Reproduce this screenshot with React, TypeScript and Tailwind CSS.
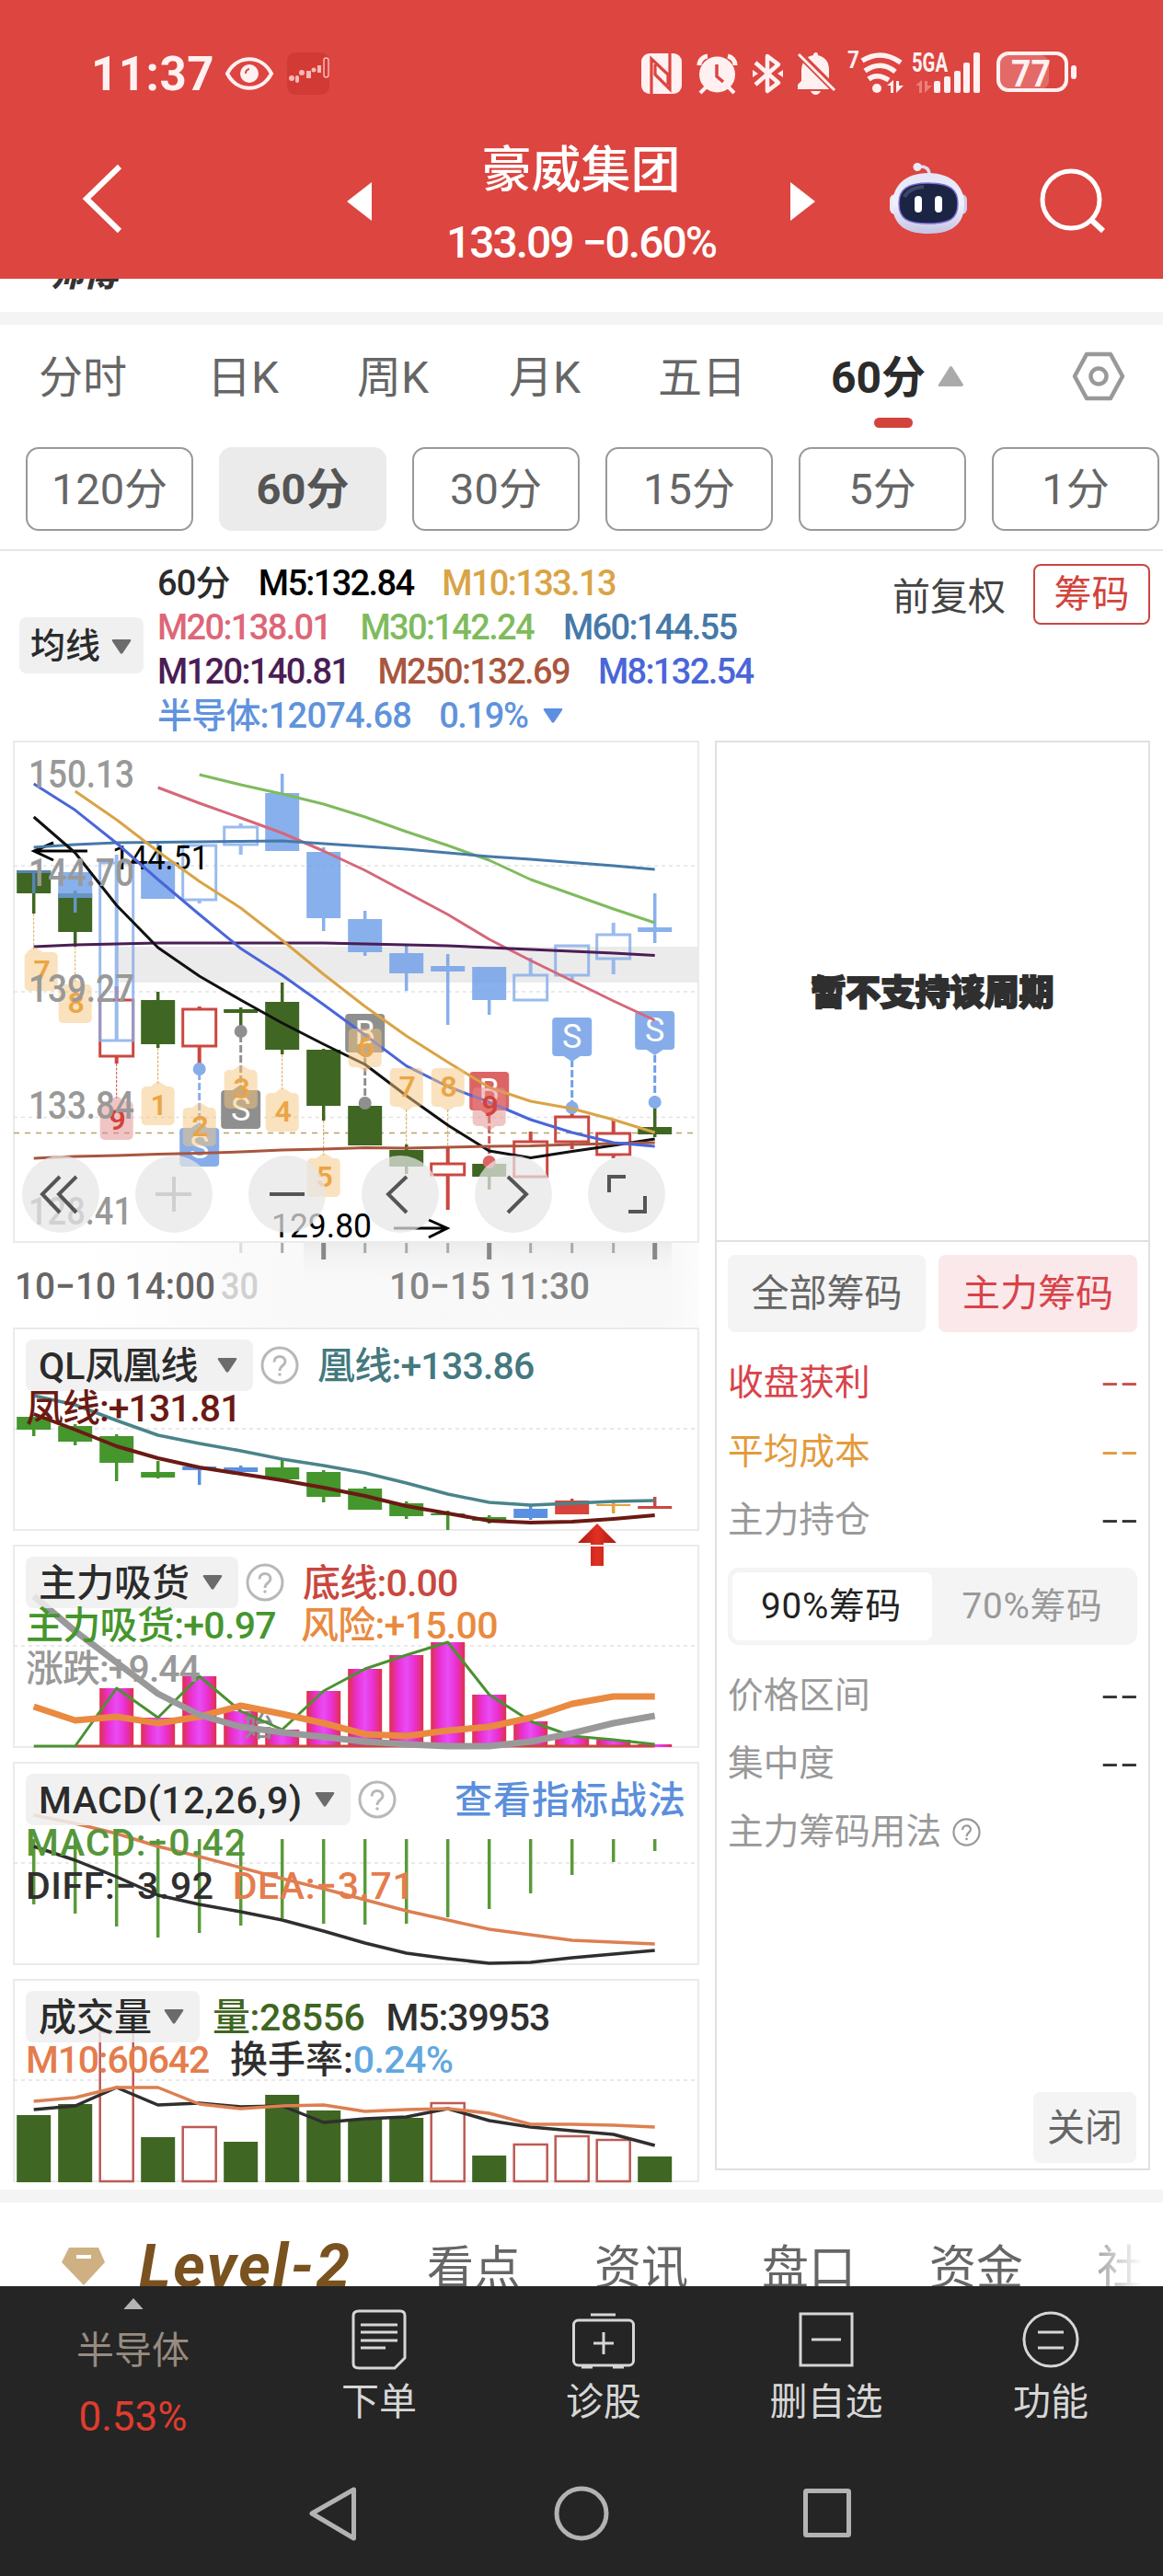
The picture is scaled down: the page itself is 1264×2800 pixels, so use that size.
import type { ReactNode } from 'react';

// every chart shares the same 16 columns, 45px apart
const colX = (i: number) => 36.7 + 45 * i;

type Kind = 'fill' | 'hollow';

interface Candle {
  top: number;
  bottom: number;
  high: number;
  low: number;
  kind: Kind;
  color: string;
}

const GREEN = '#3f6622';
const RED = '#cc4740';
const BLUE = '#86adea';
const DEEP_BLUE = '#6f9fe8';

function c(top: number, bottom: number, high: number, low: number, kind: Kind, color: string): Candle {
  return { top, bottom, high, low, kind, color };
}

const priceCandles: Candle[] = [
  c(946, 971, 946, 993, 'fill', GREEN),
  c(971, 1013, 968, 1029, 'fill', GREEN),
  c(1086, 1148, 1072, 1156, 'hollow', RED),
  c(1087, 1135, 1078, 1139, 'fill', GREEN),
  c(1096, 1137, 1094, 1162, 'hollow', RED),
  c(1097, 1101, 1095, 1121, 'fill', GREEN),
  c(1089, 1141, 1068, 1146, 'fill', GREEN),
  c(1141, 1202, 1140, 1218, 'fill', GREEN),
  c(1202, 1245, 1202, 1245, 'fill', GREEN),
  c(1250, 1268, 1244, 1276, 'fill', GREEN),
  c(1264, 1277, 1246, 1315, 'hollow', RED),
  c(1265, 1279, 1265, 1293, 'fill', GREEN),
  c(1240, 1279, 1230, 1279, 'hollow', RED),
  c(1213, 1241, 1205, 1249, 'hollow', RED),
  c(1231, 1255, 1216, 1259, 'hollow', RED),
  c(1225, 1233, 1198, 1236, 'fill', GREEN),
];

const sectorCandles: Candle[] = [
  c(946, 949, 946, 971, 'fill', '#5c8cd0'),
  c(948, 976, 968, 992, 'fill', DEEP_BLUE),
  c(937, 1131, 929, 937, 'hollow', BLUE),
  c(936, 977, 914, 977, 'fill', DEEP_BLUE),
  c(918, 978, 918, 982, 'hollow', BLUE),
  c(898, 918, 895, 929, 'hollow', BLUE),
  c(862, 925, 841, 925, 'fill', DEEP_BLUE),
  c(926, 998, 921, 1012, 'fill', DEEP_BLUE),
  c(999, 1035, 990, 1039, 'fill', DEEP_BLUE),
  c(1036, 1058, 1028, 1077, 'fill', DEEP_BLUE),
  c(1050, 1056, 1037, 1114, 'fill', DEEP_BLUE),
  c(1051, 1087, 1051, 1103, 'fill', DEEP_BLUE),
  c(1059, 1087, 1041, 1087, 'hollow', BLUE),
  c(1027, 1060, 1027, 1065, 'hollow', BLUE),
  c(1015, 1042, 1003, 1059, 'hollow', BLUE),
  c(1008, 1013, 971, 1025, 'fill', DEEP_BLUE),
];

const qlGreen = '#45962d';
const qlBlue = '#5a90e2';
const qlCandles: Candle[] = [
  c(1540, 1554, 1540, 1561, 'fill', qlGreen),
  c(1550, 1567, 1548, 1571, 'fill', qlGreen),
  c(1561, 1590, 1559, 1610, 'fill', qlGreen),
  c(1600, 1606, 1588, 1607, 'fill', qlGreen),
  c(1594, 1598, 1594, 1614, 'fill', qlBlue),
  c(1595, 1600, 1593, 1602, 'fill', qlBlue),
  c(1595, 1608, 1587, 1608, 'fill', qlGreen),
  c(1600, 1627, 1598, 1633, 'fill', qlGreen),
  c(1618, 1641, 1616, 1641, 'fill', qlGreen),
  c(1634, 1648, 1632, 1651, 'fill', qlGreen),
  c(1645, 1647, 1642, 1663, 'fill', qlGreen),
  c(1649, 1653, 1647, 1656, 'fill', qlGreen),
  c(1640, 1650, 1636, 1652, 'fill', qlBlue),
  c(1631, 1646, 1629, 1646, 'fill', '#d8433b'),
  c(1635, 1637, 1632, 1645, 'fill', '#e3a23c'),
  c(1637, 1640, 1627, 1640, 'fill', '#cc4740'),
];

function Candles({ data }: { data: Candle[] }) {
  return (
    <>
      {data.map((d, i) => {
        const x = colX(i);
        if (d.kind === 'hollow') {
          return (
            <g key={i} stroke={d.color} fill="none">
              <path strokeWidth={4} d={`M${x} ${d.high}V${d.top}M${x} ${d.bottom}V${d.low}`} />
              <rect x={x - 18} y={d.top + 1} width={36} height={d.bottom - d.top - 1} strokeWidth={3} />
            </g>
          );
        }
        return (
          <g key={i} fill={d.color}>
            <rect x={x - 1.75} y={d.high} width={3.5} height={d.top - d.high} />
            <rect x={x - 1.75} y={d.bottom} width={3.5} height={d.low - d.bottom} />
            <rect x={x - 18.5} y={d.top} width={37} height={d.bottom - d.top} />
          </g>
        );
      })}
    </>
  );
}

interface LineProps {
  ys: number[];
  color: string;
  from?: number;
  width?: number;
}

function Line({ ys, color, from = 0, width = 3 }: LineProps) {
  const points = ys.map((y, i) => `${colX(i + from)},${y}`).join(' ');
  return <polyline points={points} fill="none" stroke={color} strokeWidth={width} strokeLinejoin="round" />;
}

const dayTags = [
  { n: '7', i: 0, y: 1035, dx: 8 },
  { n: '8', i: 1, y: 1070 },
  { n: '9', i: 2, y: 1197, red: true },
  { n: '1', i: 3, y: 1181 },
  { n: '2', i: 4, y: 1204 },
  { n: '3', i: 5, y: 1163 },
  { n: '4', i: 6, y: 1188 },
  { n: '5', i: 7, y: 1259 },
  { n: '6', i: 8, y: 1118, below: true },
  { n: '7', i: 9, y: 1161, below: true },
  { n: '8', i: 10, y: 1161, below: true },
  { n: '9', i: 11, y: 1182, below: true, red: true },
];

const signalTags = [
  { t: 'S', i: 4, y: 1226, color: '#86adea' },
  { t: 'S', i: 5, y: 1185, color: '#8f8f8f' },
  { t: 'B', i: 8, y: 1102, color: '#8f8f8f', below: true },
  { t: 'B', i: 11, y: 1165, color: '#dd6464', below: true },
  { t: 'S', i: 13, y: 1106, color: '#86adea', below: true },
  { t: 'S', i: 15, y: 1099, color: '#86adea', below: true },
];

const signalDots = [
  { i: 4, y: 1162, color: '#86adea' },
  { i: 5, y: 1121, color: '#8f8f8f' },
  { i: 8, y: 1199, color: '#8f8f8f' },
  { i: 11, y: 1263, color: '#dd6464' },
  { i: 13, y: 1204, color: '#86adea' },
  { i: 15, y: 1198, color: '#86adea' },
];

const leaders = [
  { i: 0, a: 993, b: 1032, color: '#d9b060', w: 1 },
  { i: 1, a: 1029, b: 1067, color: '#d9b060', w: 1 },
  { i: 2, a: 1156, b: 1194, color: '#cc4740', w: 1 },
  { i: 3, a: 1139, b: 1178, color: '#d9a445', w: 1 },
  { i: 4, a: 1166, b: 1222, color: '#86adea', w: 3 },
  { i: 5, a: 1125, b: 1184, color: '#8f8f8f', w: 3 },
  { i: 6, a: 1146, b: 1184, color: '#d9a445', w: 1 },
  { i: 7, a: 1218, b: 1256, color: '#d9a445', w: 1 },
  { i: 8, a: 1150, b: 1200, color: '#8f8f8f', w: 3 },
  { i: 9, a: 1206, b: 1244, color: '#d9a445', w: 1 },
  { i: 10, a: 1206, b: 1246, color: '#d9a445', w: 1 },
  { i: 11, a: 1213, b: 1262, color: '#cc5a5a', w: 3 },
  { i: 13, a: 1152, b: 1200, color: '#6f9fe8', w: 3 },
  { i: 15, a: 1147, b: 1194, color: '#6f9fe8', w: 3 },
];

interface AxisTextProps {
  x: number;
  y: number;
  w: number;
  size: number;
  color: string;
  weight?: number;
  children: string;
}

function AxisText({ x, y, w, size, color, weight = 500, children }: AxisTextProps) {
  return (
    <text x={x} y={y} textLength={w} lengthAdjust="spacingAndGlyphs" fontSize={size} fontWeight={weight} fill={color}>
      {children}
    </text>
  );
}

const zoomButtons = [66, 189, 312, 435, 558, 681];

function MainChart() {
  return (
    <svg className="block font-['Roboto',sans-serif] font-medium" width={746} height={546} viewBox="14 805 746 546">
      <rect x={15} y={806} width={744} height={544} fill="#fff" stroke="#ebebeb" strokeWidth={2} />
      <rect x={127} y={1029} width={632} height={39} fill="#ebebeb" />
      {[941, 1078, 1214.5].map((y) => (
        <path key={y} d={`M15 ${y}H758`} stroke="#e4e4e4" strokeWidth={1.5} strokeDasharray="4 4" />
      ))}
      <path d="M15 1231.6H758" stroke="#b8a26a" strokeWidth={1.5} strokeDasharray="6 6" />

      <Candles data={priceCandles} />
      <g opacity={0.82}>
        <Candles data={sectorCandles} />
      </g>

      <AxisText x={122} y={945} w={105} size={36} color="#000" weight={400}>144.51</AxisText>
      <path d="M95 925H37M58 916L37 925L58 935" fill="none" stroke="#000" strokeWidth={3} />
      <AxisText x={295} y={1345} w={109} size={36} color="#000" weight={400}>129.80</AxisText>
      <path d="M428 1335H486M466 1326L486 1335L466 1345" fill="none" stroke="#000" strokeWidth={3} />

      {leaders.map((l) => (
        <path key={l.i} d={`M${colX(l.i)} ${l.a}V${l.b}`} stroke={l.color} strokeWidth={l.w} strokeDasharray={l.w > 1 ? '8 3' : '3 1.5'} />
      ))}
      {signalDots.map((d) => (
        <circle key={d.i} cx={colX(d.i)} cy={d.y} r={7} fill={d.color} />
      ))}
      {signalTags.map((s) => {
        const x = colX(s.i);
        const tip = s.below ? `M${x - 9} ${s.y + 42}l9 6l9 -6z` : `M${x - 9} ${s.y}l9 -6l9 6z`;
        return (
          <g key={s.i} fill={s.color}>
            <rect x={x - 21.5} y={s.y} width={43} height={42} rx={4} />
            <path d={tip} />
            <text x={x} y={s.y + 33} fontSize={36} fontWeight={400} textAnchor="middle" fill="#fff">{s.t}</text>
          </g>
        );
      })}

      <Line color="#7fbb5d" from={4} ys={[842, 853, 863, 874, 888, 904, 919, 935, 956, 972, 988, 1003]} />
      <Line color="#d5677a" from={3} ys={[856, 873, 889, 905.5, 925, 946, 970, 994, 1021, 1044, 1066, 1088, 1109]} />
      <Line color="#4679a8" ys={[921, 918, 916, 915.5, 915, 914.5, 914, 917, 920, 923, 927, 931, 934, 937.5, 941, 945]} />
      <Line color="#4b1d55" ys={[1029, 1027, 1026, 1025, 1025, 1025, 1025, 1025, 1026, 1027, 1028, 1030, 1032, 1034, 1036, 1038.6]} />
      <Line color="#111" ys={[888, 927, 984, 1030, 1061, 1087, 1112, 1135, 1157, 1191, 1223, 1251, 1258.5, 1251.6, 1245, 1238]} />
      <Line color="#d9a445" from={1} ys={[860, 891, 925.5, 958, 987, 1022, 1059, 1094, 1126, 1154.5, 1182, 1197, 1205, 1217, 1231]} />
      <Line color="#a9563f" ys={[1259, 1257, 1256, 1254.5, 1253.5, 1252, 1250, 1249, 1247.5, 1248, 1247, 1246, 1245.5, 1244, 1243, 1242]} />
      <Line color="#4a66d8" ys={[852, 880.6, 916.5, 956, 994, 1031, 1060, 1092, 1125, 1158.6, 1181, 1198, 1217, 1231, 1242, 1246]} />

      {dayTags.map((d, k) => {
        const x = colX(d.i) + (d.dx ?? 0);
        const tx = colX(d.i);
        const tip = d.below ? `M${x - 9} ${d.y + 41}l9 6l9 -6z` : `M${tx - 8} ${d.y}l8 -6l10 6z`;
        return (
          <g key={k}>
            <g fill={d.red ? '#e58b8b' : '#f5c67e'} opacity={0.5}>
              <rect x={x - 18} y={d.y} width={36} height={42} rx={5} />
              <path d={tip} />
            </g>
            <text x={x + 1} y={d.y + 31} fontSize={32} fontWeight={600} textAnchor="middle" fill={d.red ? '#d2433c' : '#eba545'}>
              {d.n}
            </text>
          </g>
        );
      })}

      <AxisText x={31} y={856} w={115} size={42} color="#999">150.13</AxisText>
      <AxisText x={31} y={963} w={115} size={42} color="#999">144.70</AxisText>
      <AxisText x={31} y={1089} w={115} size={42} color="#999">139.27</AxisText>
      <AxisText x={31} y={1216} w={115} size={42} color="#999">133.84</AxisText>
      <AxisText x={31} y={1331} w={113} size={42} color="#999">128.41</AxisText>

      {zoomButtons.map((x) => (
        <circle key={x} cx={x} cy={1298} r={42} fill="#e6e6e6" opacity={0.72} />
      ))}
      <g fill="none" stroke="#555" strokeWidth={4}>
        <path d="M65 1279L46 1298L65 1318M83 1279L64 1298L83 1318" />
        <path d="M169 1298H208M189 1279V1317" stroke="#cfcfcf" />
        <path d="M293 1298H331" />
        <path d="M442 1279L422 1298L442 1318" />
        <path d="M552 1279L572 1298L552 1318" />
        <path d="M662 1296V1279H680M701 1300V1317H683" />
      </g>
    </svg>
  );
}

function TimeAxis() {
  return (
    <div className="h-[92px] bg-[linear-gradient(to_right,#ffffff_10%,#f9f9f9_40%,#f8f8f8_95%,#fcfcfc_100%)]">
      <svg className="block font-['Roboto',sans-serif] font-medium" width={746} height={92} viewBox="14 1351 746 92">
        <defs>
          <linearGradient id="axisShade" x1="0" y1="0" x2="0" y2="1">
            <stop offset="0" stopColor="#e4e4e4" />
            <stop offset="1" stopColor="#f8f8f8" stopOpacity={0} />
          </linearGradient>
        </defs>
        <rect x={330} y={1351} width={400} height={50} fill="url(#axisShade)" opacity={0.6} />
        {Array.from({ length: 11 }, (_, k) => k + 5).map((i) => {
          const major = i % 4 === 3;
          const fill = major ? '#888' : '#aaa';
          return (
            <rect
              key={i}
              x={colX(i) - (major ? 2.5 : 1.5)}
              y={1351}
              width={major ? 5 : 3}
              height={major ? 18 : 11}
              fill={i === 5 ? '#ddd' : fill}
            />
          );
        })}
        <AxisText x={240} y={1412} w={41} size={40} color="#d0d0d0">30</AxisText>
        <AxisText x={16} y={1412} w={218} size={41} color="#666">10−10 14:00</AxisText>
        <AxisText x={423} y={1412} w={218} size={41} color="#858585">10−15 11:30</AxisText>
      </svg>
    </div>
  );
}

function Caret({ className }: { className: string }) {
  return (
    <svg className={`shrink-0 ${className}`} width={22} height={16} viewBox="0 0 22 16" fill="currentColor">
      <path d="M2 0H20Q22 0 21 2L12.3 15Q11 16.5 9.7 15L1 2Q0 0 2 0Z" />
    </svg>
  );
}

function Help({ size = 42, color = '#b8b8b8' }: { size?: number; color?: string }) {
  return (
    <svg className="shrink-0" width={size} height={size} viewBox="0 0 42 42" fill="none" stroke={color} strokeWidth={3}>
      <circle cx={21} cy={21} r={19} />
      <path d="M15 17.5C15 9.5 27 9.5 27 17C27 21.5 21 21.5 21 27" />
      <circle cx={21} cy={31} r={1} fill={color} strokeWidth={1.5} />
    </svg>
  );
}

interface PanelProps {
  title: string;
  chip: string;
  top: number;
  chart: ReactNode;
  head: ReactNode;
  children: ReactNode;
}

function Panel({ title, chip, top, chart, head, children }: PanelProps) {
  return (
    <section className="relative h-[221px] text-[41px] font-medium">
      <svg className="absolute left-0 top-0 overflow-visible" width={746} height={221} viewBox={`14 ${top} 746 221`}>
        <rect x={15} y={top + 1} width={744} height={219} fill="none" stroke="#ebebeb" strokeWidth={2} />
        <path d={`M15 ${top + 110}H758`} stroke="#e2e2e2" strokeWidth={1.5} strokeDasharray="4 4" />
        {chart}
      </svg>
      <div className="relative flex h-[69px] items-center pl-[14px] pt-[13px]">
        <div className={`flex h-[56px] shrink-0 items-center rounded-lg bg-[#efefef]/85 pl-[14px] text-[#2b2b2b] ${chip}`}>
          <span className="whitespace-nowrap pt-[3px]">{title}</span>
          <Caret className="ml-auto mr-[17px] text-[#6b6b6b]" />
        </div>
        {head}
      </div>
      <div className="relative whitespace-nowrap pl-[14px] leading-[47px] -mt-[4px]">{children}</div>
    </section>
  );
}

const magentaBars = [1835, 1867, 1822, 1860, 1880, 1838, 1814, 1799, 1785, 1842, 1871, 1887, 1891, 1896];
const macdBars = [2070, 2080, 2094, 2106, 2101, 2093, 2085, 2091, 2092, 2091, 2084, 2075, 2058, 2038, 2024, 2012];
const volumes: [number, boolean][] = [
  [2299, false], [2287, false], [2208, true], [2323, false], [2311, true], [2328, false], [2277, false], [2294, false],
  [2303, false], [2302, false], [2285, true], [2343, false], [2330, true], [2321, true], [2325, true], [2344, false],
];

function Panels() {
  return (
    <div className="flex flex-col gap-[15px]">
      <Panel
        title="QL凤凰线"
        chip="w-[247px]"
        top={1443}
        head={
          <>
            <span className="ml-[8px] flex"><Help /></span>
            <span className="ml-[20px] pt-[3px] tracking-[-0.8px] text-[#43797f]">凰线:+133.86</span>
          </>
        }
        chart={
          <>
            <Candles data={qlCandles} />
            <Line color="#4a8489" width={3.5} ys={[1517, 1527, 1544, 1560, 1569, 1577, 1586, 1593, 1601, 1612, 1624, 1633, 1636, 1634, 1632, 1631]} />
            <Line color="#6b1a14" width={4} ys={[1537, 1554, 1572, 1585, 1595, 1602, 1609, 1617, 1626, 1637, 1645, 1653, 1655, 1654, 1651, 1647]} />
            <defs>
              <linearGradient id="arrow" x1="0" y1="0" x2="1" y2="0">
                <stop offset="0" stopColor="#a81c14" />
                <stop offset="0.5" stopColor="#e23022" />
                <stop offset="1" stopColor="#a81c14" />
              </linearGradient>
            </defs>
            <path d="M649 1656L670 1677H656V1702H642V1677H628Z" fill="url(#arrow)" />
          </>
        }
      >
        <div className="tracking-[-1px] text-[#6b1a14]">凤线:+131.81</div>
      </Panel>

      <Panel
        title="主力吸货"
        chip="w-[231px]"
        top={1679}
        head={
          <>
            <span className="ml-[8px] flex"><Help /></span>
            <span className="ml-[20px] pt-[3px] tracking-[-0.8px] text-[#c9473f]">底线:0.00</span>
          </>
        }
        chart={
          <>
            <defs>
              <linearGradient id="magenta" x1="0" y1="0" x2="1" y2="0">
                <stop offset="0" stopColor="#e0304a" />
                <stop offset="0.25" stopColor="#ea2fd0" />
                <stop offset="0.5" stopColor="#e84cf5" />
                <stop offset="0.75" stopColor="#ea2fd0" />
                <stop offset="1" stopColor="#e0304a" />
              </linearGradient>
            </defs>
            {magentaBars.map((y, k) => (
              <rect key={k} x={colX(k + 2) - 18.5} y={y} width={37} height={1899 - y} fill="url(#magenta)" />
            ))}
            <path d={`M${colX(1)} 1898H${colX(15)}`} stroke="#c9473f" strokeWidth={3} />
            <text x={265} y={1887} fontSize={32} fill="#8b8b8b" className="font-['Noto_Sans_CJK_SC',sans-serif]">始</text>
            <Line color="#4c9132" ys={[1898, 1898, ...magentaBars]} />
            <Line color="#e98a40" width={7} ys={[1855, 1870, 1866, 1873, 1866, 1854, 1863, 1873, 1885, 1887, 1881, 1877, 1867, 1852, 1844, 1844]} />
            <Line color="#999" width={7} ys={[1735, 1773, 1807, 1841, 1864, 1877, 1883, 1888, 1893, 1896, 1898, 1898, 1893, 1884, 1873, 1865]} />
          </>
        }
      >
        <div className="flex gap-[27px] tracking-[-0.7px]">
          <span className="text-[#45962d]">主力吸货:+0.97</span>
          <span className="text-[#e98a40]">风险:+15.00</span>
        </div>
        <div className="tracking-[-1px] text-[#999]">涨跌:+9.44</div>
      </Panel>

      <Panel
        title="MACD(12,26,9)"
        chip="w-[353px] tracking-[0.5px]"
        top={1915}
        head={
          <>
            <span className="ml-[8px] flex"><Help /></span>
            <span className="ml-auto mr-[14px] pt-[3px] tracking-[1px] text-[#5b8fdc]">查看指标战法</span>
          </>
        }
        chart={
          <>
            {macdBars.map((y, i) => (
              <path key={i} d={`M${colX(i)} 1999V${y}`} stroke="#5a9a3a" strokeWidth={3.5} />
            ))}
            <Line color="#dd7f52" width={3.5} ys={[1973, 1982, 1993, 2007, 2018, 2030, 2042, 2053, 2065, 2077, 2087, 2097, 2103, 2109, 2111, 2113]} />
            <Line color="#2f2f2f" width={3.5} ys={[2007, 2022, 2040, 2060, 2070, 2078, 2087, 2099, 2112, 2123, 2129, 2134, 2133, 2128, 2124, 2120]} />
          </>
        }
      >
        <div className="tracking-[0.8px] text-[#55963a]">MACD:−0.42</div>
        <div className="flex gap-[20px] tracking-[0.6px]">
          <span className="text-[#2f2f2f]">DIFF:−3.92</span>
          <span className="text-[#e57c4d]">DEA:−3.71</span>
        </div>
      </Panel>

      <Panel
        title="成交量"
        chip="w-[189px]"
        top={2151}
        head={
          <div className="ml-[14px] flex gap-[23px] whitespace-nowrap pt-[3px]">
            <span className="tracking-[-0.4px] text-[#3f6622]">量:28556</span>
            <span className="tracking-[-1.1px] text-[#2f2f2f]">M5:39953</span>
          </div>
        }
        chart={
          <>
            {volumes.map(([y, up], i) =>
              up ? (
                <rect key={i} x={colX(i) - 18} y={y + 1} width={36} height={2371 - y - 1} fill="#fff" fillOpacity={0.6} stroke="#bd5a55" strokeWidth={2.5} />
              ) : (
                <rect key={i} x={colX(i) - 18.5} y={y} width={37} height={2372 - y} fill="#3f6622" />
              )
            )}
            <Line color="#2f2f2f" width={3.5} ys={[2293, 2289, 2269, 2288, 2286, 2290, 2289, 2307, 2303, 2301, 2292, 2305, 2312, 2316, 2320, 2332]} />
            <Line color="#dd7f52" width={3.5} ys={[2284, 2280, 2269, 2269, 2287, 2292, 2289, 2288, 2295, 2293, 2292, 2297, 2309, 2309, 2310, 2312]} />
          </>
        }
      >
        <div className="flex gap-[23px]">
          <span className="tracking-[-1.2px] text-[#e57c4d]">M10:60642</span>
          <span className="text-[#2f2f2f]">换手率:<span className="tracking-[-0.6px] text-[#62a8e0]">0.24%</span></span>
        </div>
      </Panel>
    </div>
  );
}

function StatusBar() {
  return (
    <div className="flex h-[143px] items-center justify-between pl-[99px] pr-[92px] pt-[17px] text-[#fff1f1]">
      <div className="flex items-center">
        <span className="w-[145px] text-[51px] font-bold leading-none tracking-[0.5px]">11:37</span>
        <svg width={54} height={40} viewBox="0 0 54 40" fill="none" stroke="currentColor" strokeWidth={4}>
          <path d="M3 20C14 -1 40 -1 51 20C40 41 14 41 3 20Z" />
          <circle cx={27} cy={20} r={10} fill="currentColor" stroke="none" />
          <path d="M23 20A4.500 4.500 0 0 1 27 15" stroke="#dd4540" strokeWidth={2} />
        </svg>
        <svg className="ml-[14px]" width={47} height={46} viewBox="0 0 47 46">
          <rect width={46} height={46} rx={9} fill="#d23a35" />
          <g fill="#f6b9b3">
            <circle cx={5} cy={28} r={3} />
            <rect x={9} y={25} width={4} height={8} rx={2} />
            <circle cx={16} cy={22} r={3} />
            <rect x={21} y={20} width={5} height={8} />
            <circle cx={29} cy={19} r={2.5} />
            <rect x={33} y={14} width={4} height={8} />
          </g>
          <rect x={40} y={6} width={5} height={21} rx={2.5} fill="none" stroke="#f6b9b3" strokeWidth={1.5} />
        </svg>
      </div>
      <svg className="overflow-visible font-['Roboto',sans-serif]" width={476} height={52} viewBox="696 54 476 52" fill="currentColor">
        {/* nfc */}
        <rect x={697} y={58} width={44} height={44} rx={9} />
        <path d="M708 102V64L726 81V92M728 58V97L712 81V70" fill="none" stroke="#dd4540" strokeWidth={3.2} />
        {/* alarm */}
        <circle cx={779.5} cy={81} r={19.5} />
        <path d="M760 71A10 10 0 0 1 769 61M799 71A10 10 0 0 0 791 61" fill="none" stroke="currentColor" strokeWidth={5} />
        <path d="M768 94L761 101M791 94L798 101" stroke="currentColor" strokeWidth={4} />
        <path d="M779 70V83L786 89" fill="none" stroke="#dd4540" strokeWidth={3.5} />
        {/* bluetooth */}
        <path d="M821 68L846 90L834 99V61L846 70L821 92" fill="none" stroke="currentColor" strokeWidth={4.5} strokeLinejoin="round" />
        <path d="M818 76L824 80L818 84ZM851 76L845 80L851 84Z" />
        {/* muted bell */}
        <path d="M867 97V92L871 88V76Q872 62 884 60Q884 57 887 57Q889 57 889 60Q901 63 901 76V88L907 97Z" />
        <path d="M881 99H892Q890 103 886.5 103Q883 103 881 99Z" />
        <path d="M866 56L909 99" stroke="#dd4540" strokeWidth={8} />
        <path d="M868 59L907 98" stroke="currentColor" strokeWidth={3} />
        {/* wifi */}
        <text x={921} y={74} fontSize={26} fontWeight={700} textLength={13} lengthAdjust="spacingAndGlyphs">7</text>
        <g fill="none" stroke="currentColor" strokeWidth={5.5}>
          <path d="M937 66Q958 53 979 68" />
          <path d="M940 77Q958 65 973 78" />
          <path d="M944 86Q953 79 966 87" />
        </g>
        <circle cx={953} cy={96} r={5} />
        <path d="M964 93L971 87V101H968V93ZM974 88H977V93H982L974 101Z" />
        {/* cell */}
        <text x={991} y={78} fontSize={29} fontWeight={700} textLength={39} lengthAdjust="spacingAndGlyphs">5GA</text>
        <path d="M995 93L1002 87V101H999V93ZM1005 88H1008V93H1013L1005 101Z" opacity={0.35} />
        <rect x={1015} y={88} width={7} height={13} rx={2} />
        <rect x={1026} y={83} width={7} height={18} rx={2} />
        <rect x={1037} y={77} width={7} height={24} rx={2} />
        <rect x={1047} y={68} width={7} height={33} rx={2} />
        <rect x={1058} y={57} width={7} height={44} rx={2} />
        {/* battery */}
        <rect x={1085} y={60} width={55} height={37} rx={9} opacity={0.22} />
        <rect x={1085} y={58} width={74} height={40} rx={11} fill="none" stroke="currentColor" strokeWidth={4} />
        <rect x={1164} y={71} width={6} height={15} rx={3} />
        <text x={1099} y={93.5} fontSize={40} fontWeight={700} textLength={43} lengthAdjust="spacingAndGlyphs">77</text>
      </svg>
    </div>
  );
}

function Robot() {
  return (
    <svg width={88} height={160} viewBox="965 143 88 160">
      <defs>
        <linearGradient id="shell" x1="0" y1="0" x2="0" y2="1">
          <stop offset="0" stopColor="#e3e6f6" />
          <stop offset="0.5" stopColor="#f1f0fb" />
          <stop offset="1" stopColor="#c6c3e4" />
        </linearGradient>
      </defs>
      <path d="M998 181Q1010 180 1010 190V205" fill="none" stroke="#dcd9ef" strokeWidth={3.5} />
      <circle cx={997} cy={181.5} r={4.5} fill="#eceaf6" />
      <rect x={967} y={211} width={14} height={22} rx={6} fill="#eceaf8" />
      <rect x={1037} y={211} width={14} height={22} rx={6} fill="#cfcdec" />
      <path d="M1009 188C1034 188 1048 202 1048 222C1048 245 1033 254 1009 254C985 254 970 245 970 222C970 202 984 188 1009 188Z" fill="url(#shell)" />
      <path d="M1009 199C1032 199 1041 206 1041 221C1041 238 1032 243 1009 243C986 243 977 238 977 221C977 206 986 199 1009 199Z" fill="#1c2444" stroke="#7c6fd8" strokeWidth={1.5} />
      <path d="M983 214Q988 204 1004 203" fill="none" stroke="#3e4768" strokeWidth={4} />
      <rect x={994} y={213} width={8} height={18} rx={4} fill="#fff" />
      <rect x={1016} y={213} width={8} height={18} rx={4} fill="#fff" />
    </svg>
  );
}

function Header() {
  return (
    <header className="h-[303px] bg-[#dd4540] text-white">
      <StatusBar />
      <div className="flex h-[160px]">
        <svg className="ml-[86px]" width={50} height={160} viewBox="86 143 50 160" fill="none" stroke="currentColor" strokeWidth={6}>
          <path d="M130 181L94 216L130 251" />
        </svg>
        <svg className="ml-[241px]" width={27} height={160} viewBox="377 143 27 160" fill="currentColor">
          <path d="M404 198V240L377 219Z" />
        </svg>
        <div className="w-[455px] pt-[3px] text-center">
          <h1 className="text-[54px] font-medium leading-[79px]">豪威集团</h1>
          <p className="text-[48px] font-medium leading-[78px] tracking-[-2px]">133.09 −0.60%</p>
        </div>
        <svg width={27} height={160} viewBox="859 143 27 160" fill="currentColor">
          <path d="M859 198V240L886 219Z" />
        </svg>
        <div className="ml-[79px]"><Robot /></div>
        <svg className="ml-[75px]" width={76} height={160} viewBox="1128 143 76 160" fill="none" stroke="currentColor" strokeWidth={5}>
          <circle cx={1164} cy={217} r={31} />
          <path d="M1186 239L1199 251" strokeWidth={6} />
        </svg>
      </div>
    </header>
  );
}

function PeriodTabs() {
  return (
    <nav className="grid h-[133px] grid-cols-[183px_163px_165px_162px_188px_1fr] pl-[42px] text-[48px] leading-[116px] text-[#666]">
      <span>分时</span>
      <span>日K</span>
      <span>周K</span>
      <span>月K</span>
      <span>五日</span>
      <div className="flex">
        <div className="relative w-[116px] font-bold text-[#2b2b2b]">
          60分
          <span className="absolute left-[47px] top-[101px] h-[11px] w-[42px] rounded-full bg-[#d2433c]" />
        </div>
        <svg width={30} height={114} viewBox="1019 353 30 114" fill="#aaa">
          <path d="M1032 399Q1033.500 397 1035 399L1047 418Q1047 420 1045 420H1021Q1019 420 1020 418Z" />
        </svg>
        <svg className="ml-[115px]" width={60} height={114} viewBox="1164 353 60 114" fill="none" stroke="#999" strokeWidth={4.5} strokeLinejoin="round">
          <path d="M1181 385H1207L1220 409L1207 433H1181L1168 409Z" />
          <circle cx={1194} cy={409} r={8.5} />
        </svg>
      </div>
    </nav>
  );
}

const minuteChips = ['120分', '60分', '30分', '15分', '5分', '1分'];

function MinuteChips() {
  return (
    <div className="flex h-[113px] gap-[28px] border-b-2 border-[#e6e6e6] pl-[28px]">
      {minuteChips.map((label) => {
        const active = label === '60分';
        return (
          <button
            key={label}
            className={`h-[91px] w-[182px] shrink-0 rounded-[14px] pt-[2px] text-[47px] ${
              active ? 'bg-[#ebebeb] font-bold text-[#555]' : 'border-2 border-[#999] text-[#666]'
            }`}
          >
            {label}
          </button>
        );
      })}
    </div>
  );
}

function AverageLegend() {
  return (
    <div className="flex h-[206px] text-[38px] font-medium">
      <button className="ml-[21px] mt-[72px] flex h-[61px] w-[135px] items-center rounded-lg bg-[#f0f0f0] pl-[12px] pt-[2px] text-[#2b2b2b]">
        均线
        <Caret className="ml-[12px] text-[#6b6b6b]" />
      </button>
      <div className="ml-[15px] mt-[11px] w-[780px] whitespace-nowrap leading-[48px] tracking-[-1.65px]">
        <div className="flex gap-[31px]">
          <span className="tracking-[-0.8px] text-[#2b2b2b]">60分</span>
          <span className="text-black">M5:132.84</span>
          <span className="text-[#d9a445]">M10:133.13</span>
        </div>
        <div className="flex gap-[32px]">
          <span className="text-[#dd6678]">M20:138.01</span>
          <span className="text-[#7fbb5d]">M30:142.24</span>
          <span className="text-[#4679a8]">M60:144.55</span>
        </div>
        <div className="flex gap-[31px]">
          <span className="text-[#4b1d55]">M120:140.81</span>
          <span className="text-[#a9563f]">M250:132.69</span>
          <span className="text-[#4a66d8]">M8:132.54</span>
        </div>
        <div className="flex items-center gap-[30px] tracking-[-0.8px] text-[#5f93dc]">
          <span>半导体:12074.68</span>
          <span className="tracking-[-1.4px]">0.19%</span>
          <Caret className="-ml-[14px] text-[#5b8fe0]" />
        </div>
      </div>
      <div className="ml-[19px] flex text-[41px] font-normal">
        <span className="mt-[19px] leading-[62px] text-[#444]">前复权</span>
        <button className="ml-[30px] mt-[14px] h-[66px] w-[127px] rounded-lg border-2 border-[#c9473f] pt-[1px] text-[#d2433c]">筹码</button>
      </div>
    </div>
  );
}

function StatRow({ label, tone, valueTone }: { label: string; tone: string; valueTone: string }) {
  return (
    <div className={`flex h-[74.5px] items-center justify-between ${tone}`}>
      <span>{label}</span>
      <span className={`inline-block origin-right translate-x-[3px] scale-x-[1.65] tracking-[2px] ${valueTone}`}>--</span>
    </div>
  );
}

function ChipPanel() {
  return (
    <aside className="flex h-[1554px] w-[473px] flex-col border-2 border-[#e0e0e0] bg-white text-[38.7px] text-[#999]">
      <div className="flex h-[543px] items-center justify-center border-b-2 border-[#e0e0e0] pt-[4px] text-[37.7px] font-black text-[#2f2f2f]">
        <span className="[-webkit-text-stroke:2px_#2f2f2f]">暂不支持该周期</span>
      </div>
      <div className="flex grow flex-col px-[12px]">
        <div className="mt-[14px] flex gap-[14px] text-[41px]">
          <button className="h-[84px] w-[215px] rounded-lg bg-[#f4f4f4] pt-[2px] text-[#666]">全部筹码</button>
          <button className="h-[84px] w-[216px] rounded-lg bg-[#fae8ea] pt-[2px] text-[#d8434a]">主力筹码</button>
        </div>
        <div className="mt-[18px]">
          <StatRow label="收盘获利" tone="text-[#d8434a]" valueTone="text-[#c9504c]" />
          <StatRow label="平均成本" tone="text-[#e39b3c]" valueTone="text-[#e39b3c]" />
          <StatRow label="主力持仓" tone="text-[#999]" valueTone="text-[#333]" />
        </div>
        <div className="mt-[14px] flex h-[84px] w-[445px] rounded-xl bg-[#f4f4f4] p-[5px]">
          <button className="w-[217px] rounded-lg bg-white pr-[2px] pt-[1px] tracking-[0.8px] text-[#222]">90%筹码</button>
          <button className="w-[218px] pt-[1px] tracking-[0.8px] text-[#999]">70%筹码</button>
        </div>
        <div className="mt-[18px]">
          <StatRow label="价格区间" tone="text-[#999]" valueTone="text-[#333]" />
          <StatRow label="集中度" tone="text-[#999]" valueTone="text-[#333]" />
          <div className="flex h-[73px] items-center gap-[12px]">
            主力筹码用法
            <Help size={31} color="#999" />
          </div>
        </div>
        <button className="mb-[6px] ml-auto mr-[1px] mt-auto h-[77px] w-[112px] rounded-lg bg-[#f4f4f4] pt-[2px] text-[41px] text-[#666]">关闭</button>
      </div>
    </aside>
  );
}

function ContentTabs() {
  return (
    <div className="relative flex h-[91px] overflow-hidden whitespace-nowrap text-[51px] leading-[144px] text-[#666]">
      <svg className="ml-[66px] mt-[48px] shrink-0" width={50} height={43} viewBox="0 0 50 43">
        <path d="M9 1H41L48 17L25 42L1 17Z" fill="#cfb083" />
        <path d="M17 11H33" stroke="#fff" strokeWidth={4} />
      </svg>
      <span className="ml-[35px] w-[313px] shrink-0 text-[66px] font-bold italic leading-[140px] tracking-[2.5px] text-[#7a5220]">Level-2</span>
      <div className="flex shrink-0 gap-[80px]">
        <span>看点</span>
        <span>资讯</span>
        <span>盘口</span>
        <span>资金</span>
        <span>社区</span>
      </div>
      <div className="absolute right-0 top-0 h-full w-[90px] bg-linear-to-r from-white/20 to-white to-75%" />
    </div>
  );
}

function ToolItem({ label, left, children }: { label: string; left: string; children: ReactNode }) {
  return (
    <div className={`flex w-[140px] flex-col items-center text-[41px] ${left}`}>
      <svg className="mt-[22px]" width={72} height={72} viewBox="0 0 72 72" fill="none" stroke="#d6d6d6" strokeWidth={3}>
        {children}
      </svg>
      <span className="whitespace-nowrap leading-[65px]">{label}</span>
    </div>
  );
}

function BottomBar() {
  return (
    <footer className="h-[315px] bg-[#252525] text-[#d6d6d6]">
      <div className="flex h-[178px]">
        <div className="ml-[59px] flex w-[171px] flex-col items-center text-[41px]">
          <svg className="mt-[13px]" width={32} height={18} viewBox="0 0 32 18" fill="#b5b5b5">
            <path d="M16 0L32 18H0Z" />
          </svg>
          <span className="mt-[9px] leading-[72px] text-[#988b80]">半导体</span>
          <span className="text-[44px] leading-[72px] text-[#e03c2e]">0.53%</span>
        </div>
        <ToolItem label="下单" left="ml-[112px]">
          <path d="M14 5H59Q64 5 64 10V56L53 67H14Q8 67 8 62V10Q8 5 14 5Z" />
          <path d="M16 20H56M16 28H56M16 37H56M16 45H43" />
        </ToolItem>
        <ToolItem label="诊股" left="ml-[104px]">
          <rect x={3.5} y={15} width={65} height={49} rx={5} />
          <path d="M22 9H49M36 28V52M25 40H47M12 66H24M46 66H58" />
        </ToolItem>
        <ToolItem label="删自选" left="ml-[102px]">
          <rect x={8} y={8} width={56} height={56} />
          <path d="M20 36H52" />
        </ToolItem>
        <ToolItem label="功能" left="ml-[104px]">
          <circle cx={36} cy={36} r={29} />
          <path d="M22 28H50M22 45H50" />
        </ToolItem>
      </div>
      <svg className="block" width={1264} height={137} viewBox="0 2663 1264 137" fill="none" stroke="#b3b3b3" strokeWidth={5} strokeLinejoin="round">
        <path d="M384.500 2706V2759L339 2732Z" />
        <circle cx={632} cy={2732} r={27} />
        <rect x={875.5} y={2707.5} width={47} height={48} rx={1} />
      </svg>
    </footer>
  );
}

export default function App() {
  return (
    <div className="w-[1264px] overflow-hidden bg-white font-['Roboto','Noto_Sans_CJK_SC',sans-serif]">
      <Header />
      <div className="h-[50px] overflow-hidden border-b-[14px] border-[#f4f4f4]">
        <div className="-mt-[25px] ml-[54px] text-[37px] font-black italic leading-[42px] text-[#333]">师傅</div>
      </div>
      <PeriodTabs />
      <MinuteChips />
      <AverageLegend />
      <main className="flex h-[1575px] gap-[17px] pl-[14px]">
        <div className="w-[746px]">
          <MainChart />
          <TimeAxis />
          <Panels />
        </div>
        <ChipPanel />
      </main>
      <div className="h-[14px] bg-[#f4f4f4]" />
      <ContentTabs />
      <BottomBar />
    </div>
  );
}
